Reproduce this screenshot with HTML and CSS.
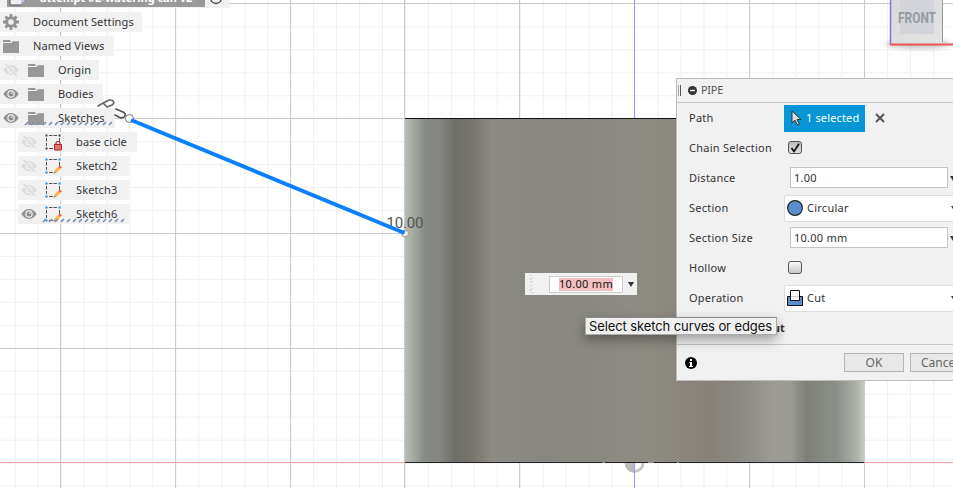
FILE: index.html
```html
<!DOCTYPE html>
<html lang="en">
<head>
<meta charset="utf-8">
<title>Pipe</title>
<link rel="stylesheet" href="styles.css">
</head>
<body>
<svg width="0" height="0" class="defs">
  <symbol id="eye" viewBox="0 0 16 12"><path d="M.3 6Q3.5 1 8 1t7.7 5Q12.500 11 8 11T.3 6Z" fill="#929292"/><circle cx="8" cy="6" r="3.700" fill="#f1f1f1"/><circle cx="8" cy="6" r="2.500" fill="#8b8b8b"/><circle cx="8.700" cy="5.200" r=".9" fill="#ddd"/></symbol>
  <symbol id="eye-off" viewBox="0 0 16 12"><path d="M.3 6Q3.500 1 8 1t7.700 5Q12.500 11 8 11T.3 6Z" fill="#dcdcdc"/><circle cx="8" cy="6" r="3.600" fill="#f1f1f1"/><circle cx="8" cy="6" r="2.300" fill="#dcdcdc"/><path d="m2 0 12 12" stroke="#f1f1f1" stroke-width="3"/><path d="m2.500 0 11.500 12" stroke="#d6d6d6" stroke-width="1.200"/></symbol>
  <symbol id="folder" viewBox="0 0 16 13"><path d="M0 0h7l1 2H0ZM0 3h8.500l1-1.700H16V13H0Z" fill="#989898"/></symbol>
  <symbol id="frame" viewBox="0 0 17 17"><path d="M4 1.500h3.500M8.500 1.500H12M1.500 4v3.500M1.500 9v3M14.500 4v4M4 14.500h4" fill="none" stroke="#555"/></symbol>
  <symbol id="sketch" viewBox="0 0 17 17"><use href="#frame"/><path d="M.5.500h2v2h-2zM13.500.5h2v2h-2zM.5 13.500h2v2h-2z" fill="#1689e4"/><path d="m9 15 1-3 3.500-3.500 2 2L12 14.500Z" fill="#f7b73c"/><path d="m13.500 9 1.500-1.300 1.800 1.600-1.500 1.400Z" fill="#f04f54"/><path d="m8.500 15.500.8-2 1.600 1.500Z" fill="#776e66"/></symbol>
  <symbol id="sketch-lock" viewBox="0 0 17 17"><use href="#frame"/><path d="M.5.500h2v2h-2zM13.500.5h2v2h-2zM.5 13.500h2v2h-2z" fill="#444"/><path d="M9.500 10.500h7v5.500h-7z" fill="#d77679" stroke="#bd1e27"/><path d="M11 10.500V9q0-1.500 2-1.500T15 9v1.500" fill="none" stroke="#bd1e27" stroke-width="1.200"/></symbol>
</svg>

<svg class="scene" width="953" height="488" viewBox="0 0 953 488">
  <defs>
    <pattern id="minor" x="-8.300" y="3.400" width="22.960" height="22.960" patternUnits="userSpaceOnUse"><path d="M0 .5H23M.5 0V23" stroke="#f0f0f0" fill="none"/></pattern>
    <linearGradient id="steel">
      <stop offset="0" stop-color="#b9bdb3"/><stop offset=".02" stop-color="#a3a8a0"/><stop offset=".045" stop-color="#858983"/><stop offset=".075" stop-color="#858781"/><stop offset=".11" stop-color="#6f6e68"/><stop offset=".14" stop-color="#75736c"/><stop offset=".19" stop-color="#8b8a83"/><stop offset=".31" stop-color="#878680"/><stop offset=".42" stop-color="#8a8981"/><stop offset=".53" stop-color="#8e8b83"/><stop offset=".67" stop-color="#878178"/><stop offset=".73" stop-color="#8b8983"/><stop offset=".8" stop-color="#9d9b95"/><stop offset=".84" stop-color="#9b9c95"/><stop offset=".875" stop-color="#7d8078"/><stop offset=".94" stop-color="#8b918a"/><stop offset=".98" stop-color="#a8ada5"/><stop offset="1" stop-color="#c5c9c0"/>
    </linearGradient>
    <linearGradient id="cube" x2="1" y2="1"><stop stop-color="#d8d8da"/><stop offset="1" stop-color="#e5e5e5"/></linearGradient>
    <filter id="soft" x="-20%" y="-10" width="140%" height="30" filterUnits="userSpaceOnUse"><feGaussianBlur stdDeviation="3"/></filter>
  </defs>
  <rect width="953" height="488" fill="#fff"/>
  <rect width="953" height="488" fill="url(#minor)"/>
  <path d="M60.500 0V488M175.500 0V488M290.500 0V488M404.500 0V488M519.500 0V488M749.500 0V488M864.500 0V488M0 3.500H953M0 118.500H953M0 233.500H953M0 348.500H953" stroke="#cbcbcb"/>
  <path d="M634.500 0V488" stroke="#9b9bf0"/>
  <path d="M0 462.500H953" stroke="#f5a0a0"/>
  <rect x="405" y="118" width="459" height="345" fill="url(#steel)"/>
  <path d="M405 118.500H864" stroke="#111"/>
  <path d="M624.500 463h10v10a10 10 0 0 1-10-10Z" fill="#bbb"/><path d="M634.500 463h10a10 10 0 0 1-10 10v-3a7 7 0 0 0 7-7h-7Z" fill="#c8c8c8"/>
  <path d="M405 462.500H864" stroke="#222"/><path d="M634.500 463V488" stroke="#9b9bf0"/>
  <path d="M602 462.500h3M648 462.500h6M677 462.500h2" stroke="#888"/>
  <ellipse class="cube-shadow" cx="918" cy="44" rx="33" ry="4"/>
  <path d="M890 0H943V44H890Z" fill="url(#cube)"/><path d="M900 0h34v34h-34Z" fill="#d3d4d9"/>
  <path d="M942.500 0V42" stroke="#999"/><path d="M890.500 0V45" stroke="#7676ef" stroke-width="1.500"/><path d="M890 44.500H953" stroke="#f05555" stroke-width="2"/>
  <text x="898" y="23" class="cube-label" textLength="38" lengthAdjust="spacingAndGlyphs">FRONT</text>
  <text x="386.500" y="227.500" class="dimension" textLength="37">10.00</text>
  <circle cx="405" cy="233.500" r="3.500" fill="#eee" stroke="#999"/>
  <circle cx="129.500" cy="118.500" r="4" fill="#fff" stroke="#777"/>
  <path d="M131 120 404.500 233" stroke="#0a80ff" stroke-width="4"/>
</svg>

<main class="browser">
  <div class="row root"><div class="root-bar"><svg width="22" height="18" viewBox="0 0 22 18"><path d="M3 1h15v11l-4 4H3Z" fill="#ececf1" stroke="#555"/><path d="M14 16v-4l4-4v4Z" fill="#b7c4e0"/></svg><span>attempt #2-watering can v2</span></div><svg class="target" width="14" height="14" viewBox="0 0 14 14"><circle cx="7" cy="7" r="5.500" fill="none" stroke="#444" stroke-width="1.300"/><circle cx="7" cy="7" r="2" fill="#444"/></svg></div>
  <div class="row settings"><svg width="16" height="16" viewBox="-8 -8 16 16"><circle r="4.300" fill="none" stroke="#929292" stroke-width="3"/><path d="M0-8V-5M0 5V8M-8 0H-5M5 0H8M-5.600-5.600-3.500-3.500M3.500 3.500 5.600 5.600M-5.600 5.600-3.500 3.500M3.500-3.500 5.600-5.600" stroke="#929292" stroke-width="2.800"/></svg><span>Document Settings</span></div>
  <div class="row views"><svg width="16" height="13"><use href="#folder"/></svg><span>Named Views</span></div>
  <div class="row origin"><svg width="16" height="12"><use href="#eye-off"/></svg><svg width="16" height="13"><use href="#folder"/></svg><span>Origin</span></div>
  <div class="row bodies"><svg width="16" height="12"><use href="#eye"/></svg><svg width="16" height="13"><use href="#folder"/></svg><span>Bodies</span></div>
  <div class="row sketches"><svg width="16" height="12"><use href="#eye"/></svg><svg width="16" height="13"><use href="#folder"/></svg><span>Sketches</span></div>
  <div class="row child base"><svg width="16" height="12"><use href="#eye-off"/></svg><svg width="17" height="17"><use href="#sketch-lock"/></svg><span>base cicle</span></div>
  <div class="row child"><svg width="16" height="12"><use href="#eye-off"/></svg><svg width="17" height="17"><use href="#sketch"/></svg><span>Sketch2</span></div>
  <div class="row child"><svg width="16" height="12"><use href="#eye-off"/></svg><svg width="17" height="17"><use href="#sketch"/></svg><span>Sketch3</span></div>
  <div class="row child"><svg width="16" height="12"><use href="#eye"/></svg><svg width="17" height="17"><use href="#sketch"/></svg><span>Sketch6</span></div>
</main>

<svg class="marks" width="140" height="230" viewBox="0 0 140 230"><g fill="none" stroke="#666" stroke-width="1.700" stroke-linecap="round"><path d="m98 106 9-5q4-2 6 0t-1 4l-5 2M104 104l2 2"/><path d="m116 109 7 3q4 2 1 5l-3 1-6-3" stroke="#555"/></g><path d="m25 125 3-3m3 3 3-3m3 3 3-3m3 3 3-3m3 3 3-3m3 3 3-3m3 3 3-3m3 3 3-3m3 3 3-3m3 3 3-3m3 3 3-3m3 3 3-3m3 3 3-3m3 3 3-3m3 3 3-3" stroke="#7f91b1" stroke-width="1.700" fill="none"/><path d="m43 222 3-3m3 3 3-3m3 3 3-3m3 3 3-3m3 3 3-3m3 3 3-3m3 3 3-3m3 3 3-3m3 3 3-3m3 3 3-3m3 3 3-3m3 3 3-3m3 3 3-3m3 3 3-3" stroke="#7f91b1" stroke-width="1.700" fill="none"/></svg>

<div class="value-box"><i class="grip"></i><div class="value"><mark>10.00 mm</mark></div><b class="arrow"></b></div>

<section class="panel">
  <header><i class="handle"></i><svg width="9" height="9" viewBox="0 0 9 9"><circle cx="4.500" cy="4.500" r="4.500" fill="#333"/><path d="M2 4.500h5" stroke="#fff" stroke-width="1.400"/></svg><span>PIPE</span></header>
  <div class="fields">
    <div class="field"><label>Path</label><div class="selected"><svg width="11" height="16" viewBox="0 0 11 16"><path d="M1 1v12l3-2.800L6.300 15l2-1L6 9.500h4Z" fill="#ddd" stroke="#333"/></svg><span>1 selected</span></div><svg class="clear" width="10" height="10" viewBox="0 0 10 10"><path d="m1 1 8 8M9 1 1 9" stroke="#555" stroke-width="2"/></svg></div>
    <div class="field"><label>Chain Selection</label><div class="check on"><svg width="12" height="12" viewBox="0 0 12 12"><path d="m2.500 6 2.500 3.500L10 1.800" fill="none" stroke="#111" stroke-width="1.700"/></svg></div></div>
    <div class="field"><label>Distance</label><div class="input">1.00</div><b class="arrow"></b></div>
    <div class="field"><label>Section</label><div class="select"><svg width="16" height="16" viewBox="0 0 16 16"><circle cx="8" cy="8" r="7.400" fill="#5890cf" stroke="#222" stroke-width="1.200"/></svg><span>Circular</span><b class="arrow"></b></div></div>
    <div class="field"><label>Section Size</label><div class="input">10.00 mm</div><b class="arrow"></b></div>
    <div class="field"><label>Hollow</label><div class="check"></div></div>
    <div class="field"><label>Operation</label><div class="select"><svg width="16" height="16" viewBox="0 0 16 16"><path d="M.5 6.500h15v9H.5Z" fill="#5790ce" stroke="#111"/><path d="M3.500.500h9v10h-9Z" fill="#fff" stroke="#111"/><path d="M4 6.500h8" stroke="#ccc"/></svg><span>Cut</span><b class="arrow"></b></div></div>
    <div class="field cut-list"><strong>Objects To Cut</strong></div>
  </div>
  <footer><svg width="12" height="12" viewBox="0 0 12 12"><circle cx="6" cy="6" r="6" fill="#000"/><path d="M5 2h2v2H5ZM4.300 5H7v4h1v1H4V9h1V6h-.7Z" fill="#fff"/></svg><div class="button ok">OK</div><div class="button cancel">Cancel</div></footer>
</section>
<div class="tooltip"><span>Select sketch curves or edges</span></div>
</body>
</html>
```

FILE: styles.css
```css
* { box-sizing: border-box; }
body { margin: 0; width: 953px; height: 488px; overflow: hidden; position: relative; background: #fff; color: #333; font: 11px/20px "Noto Sans", sans-serif; letter-spacing: .12px; }
svg { display: block; flex: none; }
.defs { position: absolute; }
.scene, .marks { position: absolute; left: 0; top: 0; }
.cube-label { font: bold 14px Roboto, sans-serif; fill: #969ba1; letter-spacing: 0; }
.cube-shadow { fill: #888; opacity: .55; filter: blur(2.5px); }
.dimension { font: 15px Roboto, sans-serif; fill: #555; letter-spacing: 0; }
.browser { position: relative; width: 240px; margin-top: -12px; display: flex; flex-direction: column; align-items: flex-start; gap: 4px; }
.row { height: 20px; background: #f1f1f1; display: flex; align-items: center; padding-left: 3px; white-space: nowrap; }
.row > span { margin-left: 14px; }
.row > svg + svg { margin-left: 9px; }
.root { width: 230px; padding-left: 7px; }
.root-bar { width: 198px; height: 18px; background: #999; color: #fff; font-weight: bold; letter-spacing: 0; display: flex; align-items: center; }
.root-bar span { margin-left: 11px; line-height: 18px; }
.root .target { margin-left: 4px; }
.settings { width: 142px; }
.views { width: 114px; }
.origin { width: 99px; }
.bodies { width: 103px; }
.sketches { width: 115px; }
.child { margin-left: 18px; width: 111px; }
.child.base { width: 119px; }
.child > svg + svg { margin-left: 8px; }
.value-box { position: absolute; left: 525px; top: 273px; width: 112px; height: 22px; background: #f1f1f1; display: flex; align-items: center; color: #111; letter-spacing: .3px; }
.grip { width: 3px; height: 18px; margin-left: 5px; background: repeating-linear-gradient(145deg, #ccc 0 1px, #f1f1f1 1px 3px); }
.value { margin-left: 16px; width: 74px; height: 17px; border: 1px solid #ccc; background: #fff; display: flex; justify-content: center; align-items: center; white-space: nowrap; }
mark { background: #f5bfc2; color: #111; height: 13px; line-height: 12px; }
.arrow { flex: none; width: 0; height: 0; border: 3px solid transparent; border-top: 5px solid #333; border-bottom: 0; margin-left: 5px; }
.panel { position: absolute; left: 676px; top: 78px; width: 300px; height: 303px; border: 1px solid #bbb; background: #f1f1f1; display: flex; flex-direction: column; letter-spacing: .25px; }
header { height: 24px; padding-bottom: 1px; border-bottom: 1px solid #c8c8c8; display: flex; align-items: center; color: #555; letter-spacing: -.3px; }
.handle { width: 3px; height: 11px; margin-left: 1px; border-left: 1px solid #aaa; border-right: 1px solid #555; }
header svg { margin-left: 7px; }
header span { margin-left: 4px; }
.fields { height: 241px; }
.field { height: 30px; display: flex; align-items: center; padding-left: 12px; white-space: nowrap; }
.field label { width: 95px; flex: none; }
.selected { width: 81px; height: 27px; background: #0696d7; color: #fff; display: flex; align-items: center; padding-left: 7px; }
.selected span { margin-left: 4px; letter-spacing: .15px; }
.clear { margin-left: 10px; }
.check { margin: -1px 0 0 4px; width: 14px; height: 13px; border: 1px solid #555; border-radius: 3px; background: linear-gradient(#fafafa, #c8c8c8); }
.check.on { background: linear-gradient(#bbb, #e0e0e0); }
.input { margin: -1px 0 0 6px; width: 158px; height: 21px; border: 1px solid #c4c4c4; background: #fff; padding-left: 3px; line-height: 19px; }
.input + .arrow { margin-left: 2px; }
.select { width: 177px; height: 27px; border: 1px solid #ddd; border-radius: 2px; background: #fff; display: flex; align-items: center; padding-left: 2px; }
.select span { width: 143px; margin-left: 4px; flex: none; }
.select .arrow { margin-left: 1px; }
.cut-list { padding-left: 26px; }
footer { height: 36px; border-top: 1px solid #c8c8c8; display: flex; align-items: center; padding-left: 8px; flex: none; }
.button { height: 19px; border: 1px solid #b5b5b5; background: #e8e8e8; color: #666; line-height: 17px; font-size: 12px; letter-spacing: 0; }
.ok { width: 60px; margin-left: 147px; text-align: center; }
.cancel { width: 60px; margin-left: 6px; padding-left: 10px; }
.tooltip { position: absolute; left: 585px; top: 317px; width: 192px; height: 18px; border: 1px solid #aaa; border-top-color: #888; background: #f0f0f0; box-shadow: 0 5px 12px rgba(0,0,0,.35); color: #111; font: 13px/17px Inter, sans-serif; letter-spacing: -.1px; padding-left: 3px; white-space: nowrap; }
```
